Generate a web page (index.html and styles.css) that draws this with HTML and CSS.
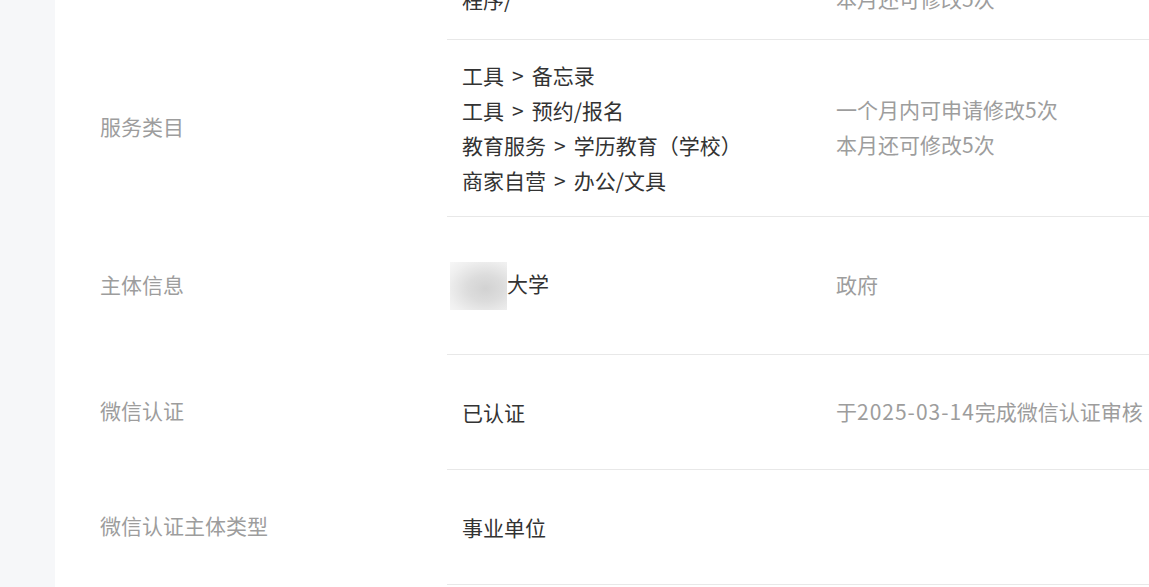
FILE: index.html
```html
<!DOCTYPE html>
<html lang="zh-CN">
<head>
    <meta charset="UTF-8">
    <title>基本设置</title>
    <link rel="stylesheet" href="styles.css">
</head>
<body>
    <aside class="sidebar"></aside>

    <main class="content">
        <div class="info-list">
            <div class="info-row">
                <div class="info-label">介绍</div>
                <div class="info-body">
                    <div class="info-value">
                        <div>学校官方服务小</div>
                        <div>程序/</div>
                    </div>
                    <div class="info-hint">
                        <div>一个月内可申请修改5次</div>
                        <div>本月还可修改5次</div>
                    </div>
                </div>
            </div>

            <div class="info-row">
                <div class="info-label">服务类目</div>
                <div class="info-body">
                    <div class="info-value">
                        <div>工具<span class="sep">&gt;</span>备忘录</div>
                        <div>工具<span class="sep">&gt;</span>预约/报名</div>
                        <div>教育服务<span class="sep">&gt;</span>学历教育（学校）</div>
                        <div>商家自营<span class="sep">&gt;</span>办公/文具</div>
                    </div>
                    <div class="info-hint">
                        <div>一个月内可申请修改5次</div>
                        <div>本月还可修改5次</div>
                    </div>
                </div>
            </div>

            <div class="info-row">
                <div class="info-label">主体信息</div>
                <div class="info-body tall">
                    <div class="info-value">
                        <span class="masked"></span>大学
                    </div>
                    <div class="info-hint">政府</div>
                </div>
            </div>

            <div class="info-row">
                <div class="info-label">微信认证</div>
                <div class="info-body">
                    <div class="info-value">已认证</div>
                    <div class="info-hint">于<span class="date">2025-03-14</span>完成微信认证审核</div>
                </div>
            </div>

            <div class="info-row">
                <div class="info-label">微信认证主体类型</div>
                <div class="info-body">
                    <div class="info-value">事业单位</div>
                    <div class="info-hint"></div>
                </div>
            </div>
        </div>
    </main>
</body>
</html>
```

FILE: styles.css
```css
body {
    margin: 0;
    height: 100vh;
    display: flex;
    overflow: hidden;
    font-family: "Noto Sans CJK SC", "Noto Sans", sans-serif;
    font-size: 21px;
    line-height: 35px;
    background-color: #fff;
}
.sidebar {
    width: 55px;
    flex-shrink: 0;
    background-color: #f6f7f9;
}
.content {
    flex: 1;
    overflow: hidden;
}
.info-list {
    margin-top: -75px;
}
.info-row {
    display: flex;
}
.info-label {
    width: 392px;
    flex-shrink: 0;
    box-sizing: border-box;
    padding: 0 0 4px 45px;
    display: flex;
    align-items: center;
    color: #9d9d9d;
}
.info-body {
    flex: 1;
    display: flex;
    align-items: center;
    box-sizing: border-box;
    min-height: 115px;
    padding: 18px 0 18px;
    border-bottom: 1px solid #e8e8e8;
}
.info-body.tall {
    min-height: 138px;
}
.info-value {
    width: 374px;
    flex-shrink: 0;
    padding-left: 15px;
    color: #333;
}
.info-hint {
    padding-bottom: 2px;
    color: #9d9d9d;
    white-space: nowrap;
}
.sep {
    margin: 0 8px;
}
.date {
    letter-spacing: 1px;
}
.masked {
    display: inline-block;
    width: 57px;
    height: 48px;
    margin-left: -12px;
    vertical-align: middle;
    background: radial-gradient(ellipse at 62% 55%, #d2d2d2 0%, #dcdcdc 35%, #efefef 75%, #f7f7f7 100%);
}
```
